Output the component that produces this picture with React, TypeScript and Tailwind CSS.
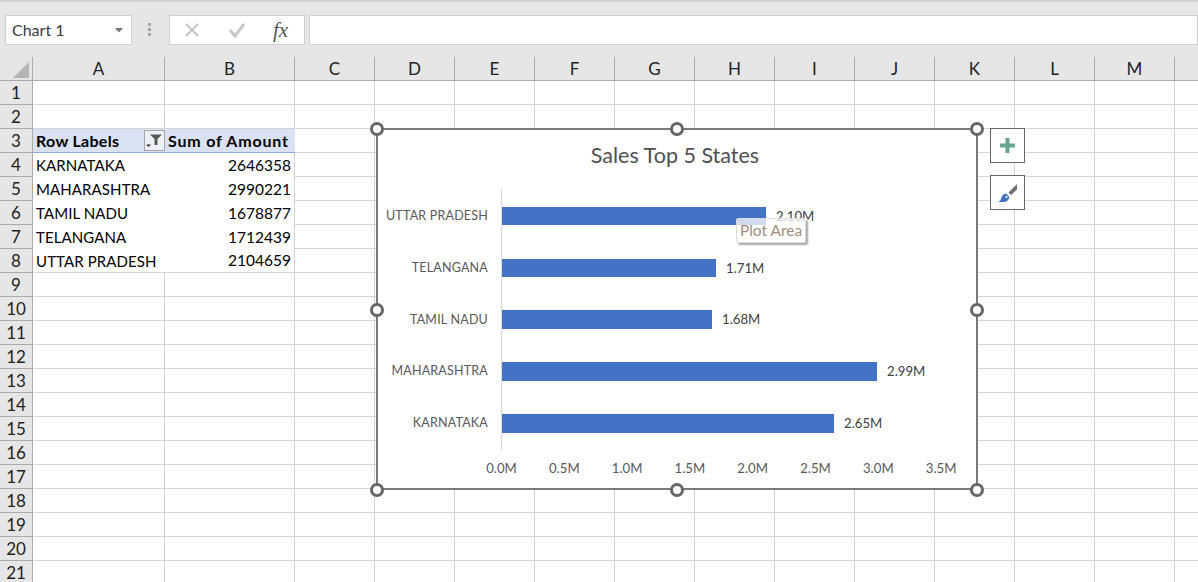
const columns = [
  { name: "A", width: 132 },
  { name: "B", width: 130 },
  { name: "C", width: 80 },
  { name: "D", width: 80 },
  { name: "E", width: 80 },
  { name: "F", width: 80 },
  { name: "G", width: 80 },
  { name: "H", width: 80 },
  { name: "I", width: 80 },
  { name: "J", width: 80 },
  { name: "K", width: 80 },
  { name: "L", width: 80 },
  { name: "M", width: 80 },
  { name: "", width: 24 },
];

const pivot: Record<number, [string, string]> = {
  4: ["KARNATAKA", "2646358"],
  5: ["MAHARASHTRA", "2990221"],
  6: ["TAMIL NADU", "1678877"],
  7: ["TELANGANA", "1712439"],
  8: ["UTTAR PRADESH", "2104659"],
};

const bars = [
  { label: "UTTAR PRADESH", value: "2.10M", y: 207, h: 18, w: 264, labelY: 220, valueY: 221 },
  { label: "TELANGANA", value: "1.71M", y: 259, h: 18, w: 214, labelY: 272, valueY: 273 },
  { label: "TAMIL NADU", value: "1.68M", y: 310, h: 19, w: 210, labelY: 324, valueY: 324 },
  { label: "MAHARASHTRA", value: "2.99M", y: 362, h: 19, w: 375, labelY: 375, valueY: 376 },
  { label: "KARNATAKA", value: "2.65M", y: 414, h: 19, w: 332, labelY: 427, valueY: 428 },
];

const ticks = ["0.0M", "0.5M", "1.0M", "1.5M", "2.0M", "2.5M", "3.0M", "3.5M"];

const rows = Array.from({ length: 21 }, (_, i) => i + 1);

function Handle({ hidden }: { hidden?: boolean }) {
  return (
    <div
      className={`h-[14px] w-[14px] rounded-full border-[3px] border-[#666666] bg-white ${hidden ? "invisible" : ""}`}
    />
  );
}

function Chart() {
  return (
    <div className="absolute left-[376px] top-[128px] h-[362px] w-[602px] border-2 border-[#7a7a7a] bg-white">
      <svg
        width="602"
        height="362"
        viewBox="376 128 602 362"
        className="absolute -left-[2px] -top-[2px]"
        fontFamily="Lato, sans-serif"
      >
        <text x="675" y="163" textAnchor="middle" fontSize="21.500" fill="#505050">
          Sales Top 5 States
        </text>
        <line x1="501.5" y1="189" x2="501.5" y2="450" stroke="#d9d9d9" />
        {bars.map((b) => (
          <g key={b.label}>
            <text x="488" y={b.labelY} textAnchor="end" fontSize="12.500" letterSpacing="0.2" fill="#595959">
              {b.label}
            </text>
            <rect x="502" y={b.y} width={b.w} height={b.h} fill="#4472c4" />
            <text x={502 + b.w + 10} y={b.valueY} fontSize="13.200" fill="#404040">
              {b.value}
            </text>
          </g>
        ))}
        {ticks.map((t, i) => (
          <text key={t} x={501.5 + i * 62.8} y="473" textAnchor="middle" fontSize="13.200" fill="#595959">
            {t}
          </text>
        ))}
      </svg>
      <div className="absolute left-[358px] top-[88px] h-[25px] w-[70px] rounded-[2px] border border-[#dcdcdc] bg-white/75 text-center text-[15.5px] leading-[23px] text-[#a08f80] shadow-[2px_2px_2px_rgba(0,0,0,0.35)]">
        Plot Area
      </div>
    </div>
  );
}

function ChartButton({ children }: { children: React.ReactNode }) {
  return (
    <div className="flex h-[35px] w-[35px] items-center justify-center border border-[#666666] bg-white">
      {children}
    </div>
  );
}

export default function App() {
  return (
    <div className="relative h-[582px] w-[1198px] overflow-hidden bg-[#e6e6e6] font-['Lato',sans-serif] text-[15px] text-black">
      {/* formula bar */}
      <div className="flex h-[57px] items-start border-t-2 border-[#d0d0d0] pt-[13px]">
        <div className="ml-[5px] flex h-[30px] w-[127px] items-center justify-between border border-[#cfcfcf] bg-white pl-[6px] pr-[8px] text-[16px] text-[#3c3c3c]">
          Chart 1
          <svg width="8" height="5" viewBox="0 0 8 5">
            <path d="M0 0h8L4 4.500z" fill="#777" />
          </svg>
        </div>
        <div className="ml-[16px] mt-[8px] flex w-[4px] flex-col gap-[2px]">
          <div className="h-[3px] w-[3px] bg-[#a6a6a6]" />
          <div className="h-[3px] w-[3px] bg-[#a6a6a6]" />
          <div className="h-[3px] w-[3px] bg-[#a6a6a6]" />
        </div>
        <div className="ml-[17px] flex h-[30px] w-[136px] items-center border border-[#cfcfcf] bg-white">
          <svg width="16" height="16" viewBox="0 0 16 16" className="ml-[14px]">
            <path d="M2 2l12 12M14 2L2 14" stroke="#c4c4c4" strokeWidth="2" fill="none" />
          </svg>
          <svg width="18" height="16" viewBox="0 0 18 16" className="ml-[28px]">
            <path d="M2 8l5 6L16 2" stroke="#c8c8c8" strokeWidth="3" fill="none" />
          </svg>
          <span className="ml-[27px] font-['Liberation_Serif',serif] text-[21px] italic leading-none text-[#555]">
            fx
          </span>
        </div>
        <div className="ml-[4px] h-[30px] flex-1 border border-[#cfcfcf] bg-white" />
      </div>

      {/* column headers */}
      <div className="flex h-[24px] border-b border-[#ababab] bg-[#e6e6e6]">
        <div className="flex w-[33px] shrink-0 items-end justify-end border-r border-[#ababab] pb-[2px] pr-[3px]">
          <svg width="16" height="16" viewBox="0 0 16 16">
            <path d="M16 0v16H0z" fill="#b4b4b4" />
          </svg>
        </div>
        {columns.map((c, i) => (
          <div
            key={i}
            style={{ width: c.width }}
            className="flex shrink-0 items-center justify-center border-r border-[#ababab] text-[17px] text-[#222]"
          >
            {c.name}
          </div>
        ))}
      </div>

      {/* cells */}
      {rows.map((r) => (
        <div key={r} className="flex h-[24px]">
          <div className="flex w-[33px] shrink-0 items-center justify-center border-b border-r border-[#ababab] bg-[#e6e6e6] text-[17px] text-[#222]">
            {r}
          </div>
          {columns.map((c, i) => {
            const isHeader = r === 3 && i < 2;
            const pivotRow = i < 2 ? pivot[r] : undefined;
            if (isHeader) {
              return (
                <div
                  key={i}
                  style={{ width: c.width }}
                  className={`relative flex shrink-0 items-center whitespace-nowrap border-b border-[#8ea9db] bg-[#d9e1f2] px-[3px] text-[16px] font-bold ${
                    i === 0 ? "tracking-[0.3px]" : "tracking-[0.8px]"
                  }`}
                >
                  {i === 0 ? "Row Labels" : "Sum of Amount"}
                  {i === 0 && (
                    <div className="absolute right-0 top-[1px] flex h-[21px] w-[21px] items-center justify-center border border-[#a6a6a6] bg-[#eef0f5]">
                      <svg width="17" height="15" viewBox="0 0 17 15">
                        <path d="M4 1.500h12l-4.500 4.500v6h-3V6z" fill="#595959" />
                        <path d="M0 11.500h5l-2.500 2.500z" fill="#333" />
                      </svg>
                    </div>
                  )}
                </div>
              );
            }
            if (pivotRow) {
              return (
                <div
                  key={i}
                  style={{ width: c.width }}
                  className={`flex shrink-0 items-center whitespace-nowrap bg-white pt-[1px] ${
                    i === 1
                      ? "justify-end border-r border-[#d4d4d4] pr-[3px] text-[15.5px]"
                      : "pl-[3px] tracking-[0.1px]"
                  } ${r === 8 ? "border-b border-[#d4d4d4]" : ""}`}
                >
                  {pivotRow[i]}
                </div>
              );
            }
            return (
              <div
                key={i}
                style={{ width: c.width }}
                className="shrink-0 border-b border-r border-[#d4d4d4] bg-white"
              />
            );
          })}
        </div>
      ))}

      <Chart />

      {/* selection handles sit on the chart frame */}
      <div className="absolute left-[370px] top-[122px] flex h-[375px] w-[614px] flex-col justify-between">
        <div className="flex justify-between">
          <Handle />
          <Handle />
          <Handle />
        </div>
        <div className="flex justify-between">
          <Handle />
          <Handle hidden />
          <Handle />
        </div>
        <div className="flex justify-between">
          <Handle />
          <Handle />
          <Handle />
        </div>
      </div>

      <div className="absolute left-[990px] top-[128px] flex flex-col gap-[12px]">
        <ChartButton>
          <svg width="15" height="15" viewBox="0 0 15 15">
            <path d="M5.500 0h4v5.500H15v4H9.500V15h-4V9.500H0v-4h5.500z" fill="#66a68f" />
          </svg>
        </ChartButton>
        <ChartButton>
          <svg width="19" height="18" viewBox="0 0 19 18">
            <path d="M19 0v5.500l-6 5.500-2.500-2.500z" fill="#6e6e6e" />
            <path d="M8 9.500l3.500 3.500C11 16 8.500 18 6 18H0c2-1 3-2.500 3.500-4.500C4.300 11 6 9.800 8 9.500z" fill="#3f76c4" />
            <circle cx="8.500" cy="13" r="1.100" fill="#fff" />
          </svg>
        </ChartButton>
      </div>
    </div>
  );
}
